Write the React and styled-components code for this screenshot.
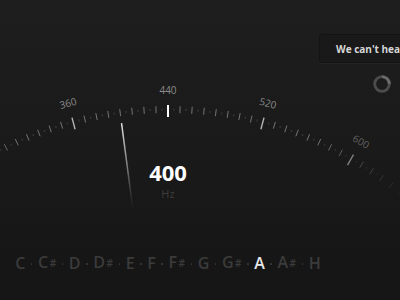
import React from 'react'
import styled, { createGlobalStyle } from 'styled-components'

const GlobalStyle = createGlobalStyle`
  html, body { margin: 0; padding: 0; background: #181818; }
  body { font-family: "Open Sans", "DejaVu Sans", sans-serif; }
`

const CX = 168
const CY = 476
const NOTES = ['C', 'C#', 'D', 'D#', 'E', 'F', 'F#', 'G', 'G#', 'A', 'A#', 'H']
const ACTIVE = 'A'
const FREQ = 400

const angleOf = hz => ((hz - 440) / 80) * 15
const pt = (r, deg) => {
  const a = (deg * Math.PI) / 180
  return [CX + r * Math.sin(a), CY - r * Math.cos(a)]
}
const fade = deg => {
  const d = Math.abs(deg)
  return d < 24 ? 1 : Math.max(0, 1 - (d - 24) / 17)
}

function Dial() {
  const ticks = []
  const labels = []
  for (let hz = 200; hz <= 680; hz += 5) {
    const a = angleOf(hz)
    const op = fade(a)
    if (op <= 0) continue
    const major = (hz - 440) % 80 === 0
    const minor = hz % 10 === 0
    let r1, r2, color, w
    if (major) {
      r1 = 359; r2 = 371
      color = hz === 440 ? '#ffffff' : '#b4b4b4'
      w = hz === 440 ? 2 : 1.4
      const [lx, ly] = pt(385, a)
      labels.push(
        <text
          key={'l' + hz}
          transform={`translate(${lx} ${ly}) rotate(${a})`}
          textAnchor="middle"
          dominantBaseline="middle"
          fill="#8c8c8c"
          opacity={op}
          fontSize="10"
          fontFamily="Open Sans, sans-serif"
        >
          {hz}
        </text>
      )
    } else if (minor) {
      r1 = 363; r2 = 370; color = '#747474'; w = 1
    } else {
      r1 = 365.5; r2 = 367.5; color = '#404040'; w = 1
    }
    const [x1, y1] = pt(r1, a)
    const [x2, y2] = pt(r2, a)
    ticks.push(
      <line key={hz} x1={x1} y1={y1} x2={x2} y2={y2} stroke={color} strokeWidth={w} opacity={op} />
    )
  }
  const na = angleOf(FREQ)
  const [nx1, ny1] = pt(356, na)
  const [nx2, ny2] = pt(268, na)
  return (
    <DialSvg width="400" height="240" viewBox="0 0 400 240">
      <defs>
        <linearGradient id="needle" gradientUnits="userSpaceOnUse" x1={nx1} y1={ny1} x2={nx2} y2={ny2}>
          <stop offset="0" stopColor="#e4e4e4" />
          <stop offset="0.55" stopColor="#9a9a9a" stopOpacity="0.7" />
          <stop offset="1" stopColor="#555" stopOpacity="0" />
        </linearGradient>
      </defs>
      {ticks}
      {labels}
      <line x1={nx1} y1={ny1} x2={nx2} y2={ny2} stroke="url(#needle)" strokeWidth="1.5" />
    </DialSvg>
  )
}

function Spinner() {
  return (
    <SpinnerWrap>
      <svg width="18" height="18" viewBox="0 0 18 18">
        <circle cx="9" cy="9" r="7.3" fill="none" stroke="#4c4c4c" strokeWidth="2.8" />
        <path d="M9 1.7 A7.3 7.3 0 0 1 16.3 9" fill="none" stroke="#6a6a6a" strokeWidth="2.8" />
      </svg>
    </SpinnerWrap>
  )
}

export default function App() {
  return (
    <>
      <GlobalStyle />
      <Page>
        <Dial />
        <Main>
          <Readout>
            <Value>{FREQ}</Value>
            <Unit>Hz</Unit>
          </Readout>
          <NoteRow>
            {NOTES.map((n, i) => (
              <React.Fragment key={n}>
                {i > 0 && <Dot />}
                <Note $active={n === ACTIVE}>
                  {n[0]}
                  {n[1] && <Sharp>#</Sharp>}
                </Note>
              </React.Fragment>
            ))}
          </NoteRow>
        </Main>
        <Hint>
          <Tooltip>We can&apos;t hear you</Tooltip>
          <Spinner />
        </Hint>
      </Page>
    </>
  )
}

const Page = styled.div`
  position: relative;
  width: 400px;
  height: 300px;
  overflow: hidden;
  background: linear-gradient(180deg, #1e1e1e 0%, #1a1a1a 50%, #151515 100%);
`

const DialSvg = styled.svg`
  position: absolute;
  left: 0;
  top: 0;
  display: block;
`

const Main = styled.div`
  position: relative;
  width: 336px;
  padding-top: 161px;
  display: flex;
  flex-direction: column;
  align-items: center;
`

const Readout = styled.div`
  display: flex;
  flex-direction: column;
  align-items: center;
`

const Value = styled.div`
  font-size: 22px;
  font-weight: 700;
  line-height: 22px;
  color: #ffffff;
`

const Unit = styled.div`
  margin-top: 5px;
  font-size: 11px;
  line-height: 11px;
  color: #3c3c3c;
`

const NoteRow = styled.div`
  margin-top: 55px;
  display: flex;
  align-items: center;
  gap: 5.6px;
`

const Note = styled.div`
  display: flex;
  align-items: baseline;
  font-size: 16px;
  font-weight: 600;
  line-height: 16px;
  color: ${p => (p.$active ? '#e8e8e8' : '#3b3b3b')};
`

const Sharp = styled.span`
  font-size: 10px;
  font-weight: 600;
  margin-left: 1.5px;
  position: relative;
  top: -1px;
`

const Dot = styled.span`
  width: 1.5px;
  height: 1.5px;
  border-radius: 50%;
  background: #383838;
  margin-top: 2px;
`

const Hint = styled.div`
  position: absolute;
  top: 34px;
  left: 319px;
  display: flex;
  flex-direction: column;
`

const Tooltip = styled.div`
  height: 27px;
  padding: 0 16px;
  display: flex;
  align-items: center;
  white-space: nowrap;
  background: #191919;
  border: 1px solid #141414;
  border-radius: 2px;
  box-shadow: 0 1px 0 rgba(255, 255, 255, 0.03);
  font-size: 10px;
  font-weight: 700;
  color: #d6d6d6;
`

const SpinnerWrap = styled.div`
  margin-top: 12px;
  margin-left: 54px;
  width: 18px;
  height: 18px;
  svg { display: block; }
`
